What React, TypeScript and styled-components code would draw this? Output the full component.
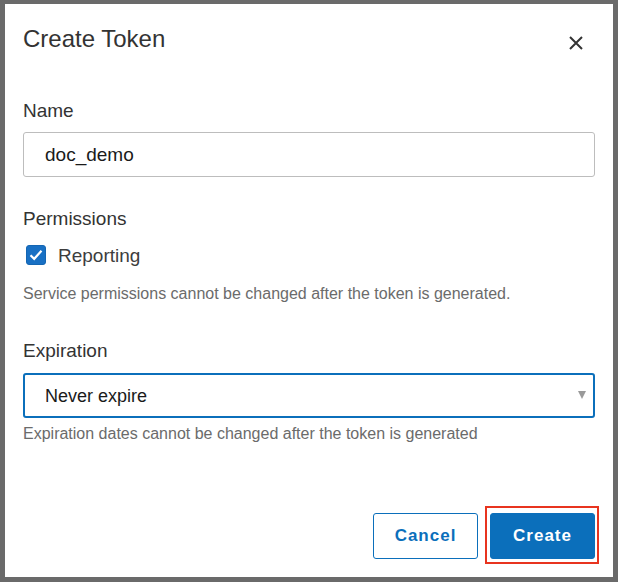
import React from 'react';
import styled, { createGlobalStyle } from 'styled-components';

const GlobalStyle = createGlobalStyle`
  html, body {
    margin: 0;
    padding: 0;
    background: #6a6a6a;
  }
  * {
    box-sizing: border-box;
  }
`;

const BRAND = '#0b6fbb';

const Backdrop = styled.div`
  width: 618px;
  height: 582px;
  padding: 4px 5px 5px 5px;
  background: #6a6a6a;
  font-family: 'Liberation Sans', Arial, sans-serif;
`;

const Dialog = styled.div`
  width: 608px;
  height: 573px;
  background: #fff;
  padding: 20px 18px 18px 18px;
  display: flex;
  flex-direction: column;
`;

const Header = styled.div`
  display: flex;
  justify-content: space-between;
  align-items: flex-start;
  margin-bottom: 45px;
`;

const Title = styled.h2`
  margin: 0;
  font-size: 24px;
  line-height: 29px;
  font-weight: 400;
  color: #333;
`;

const CloseButton = styled.button`
  width: 24px;
  height: 24px;
  margin: 7px 7px 0 0;
  padding: 0;
  border: none;
  background: transparent;
  display: flex;
  align-items: center;
  justify-content: center;
  color: #333;
  cursor: pointer;
`;

const Field = styled.div<{ $gap?: number; $top?: number }>`
  display: flex;
  flex-direction: column;
  margin-top: ${({ $top }) => $top ?? 0}px;
  margin-bottom: ${({ $gap }) => $gap ?? 0}px;
`;

const Label = styled.label<{ $space?: number }>`
  font-size: 19px;
  line-height: 22px;
  color: #333;
  margin-bottom: ${({ $space }) => $space ?? 12}px;
`;

const TextInput = styled.input`
  width: 100%;
  height: 45px;
  border: 1px solid #bdbdbd;
  border-radius: 3px;
  padding: 0 20px 0 21px;
  font-family: inherit;
  font-size: 19px;
  color: #1a1a1a;
  outline: none;
`;

const SelectWrap = styled.div`
  position: relative;
`;

const Select = styled.select`
  width: 100%;
  height: 45px;
  border: 2px solid ${BRAND};
  border-radius: 3px;
  padding: 0 30px 0 20px;
  font-family: inherit;
  font-size: 18px;
  color: #1a1a1a;
  background: #fff;
  appearance: none;
  -webkit-appearance: none;
  outline: none;
`;

const Caret = styled.span`
  position: absolute;
  right: 9px;
  top: 18px;
  width: 0;
  height: 0;
  border-left: 4.5px solid transparent;
  border-right: 4.5px solid transparent;
  border-top: 8px solid #9a9a9a;
  pointer-events: none;
`;

const CheckRow = styled.label`
  display: flex;
  align-items: flex-start;
  gap: 12px;
  padding-left: 3px;
  margin: 0 0 16px 0;
  height: 24px;
`;

const CheckBox = styled.span<{ $checked: boolean }>`
  width: 20px;
  height: 20px;
  margin-top: 1px;
  border-radius: 3px;
  background: ${({ $checked }) => ($checked ? '#1870c4' : '#fff')};
  border: 1px solid ${({ $checked }) => ($checked ? '#1466b3' : '#aaa')};
  display: flex;
  align-items: center;
  justify-content: center;
`;

const CheckText = styled.span`
  font-size: 19px;
  line-height: 22px;
  padding-top: 1px;
  color: #3d3d3d;
`;

const Help = styled.p<{ $top?: number }>`
  margin: ${({ $top }) => $top ?? 0}px 0 0 0;
  font-size: 16px;
  line-height: 20px;
  color: #6b6b6b;
`;

const Footer = styled.div`
  margin-top: auto;
  display: flex;
  justify-content: flex-end;
  gap: 12px;
`;

const Highlight = styled.div`
  position: relative;
  &::after {
    content: '';
    position: absolute;
    top: -7px;
    left: -5px;
    right: -4px;
    bottom: -5px;
    border: 2.5px solid #e8341f;
    pointer-events: none;
  }
`;

const Button = styled.button<{ $primary?: boolean }>`
  width: 105px;
  height: 46px;
  border-radius: 3px;
  border: 1px solid ${BRAND};
  background: ${({ $primary }) => ($primary ? BRAND : '#fff')};
  color: ${({ $primary }) => ($primary ? '#fff' : BRAND)};
  font-family: inherit;
  font-size: 17px;
  font-weight: 700;
  letter-spacing: 1px;
  cursor: pointer;
`;

export default function App() {
  return (
    <>
      <GlobalStyle />
      <Backdrop>
        <Dialog role="dialog" aria-label="Create Token">
          <Header>
            <Title>Create Token</Title>
            <CloseButton aria-label="Close">
              <svg width="14" height="14" viewBox="0 0 14 14">
                <path d="M1 1 L13 13 M13 1 L1 13" stroke="currentColor" strokeWidth="2" />
              </svg>
            </CloseButton>
          </Header>

          <Field $gap={31}>
            <Label $space={10}>Name</Label>
            <TextInput defaultValue="doc_demo" />
          </Field>

          <Field>
            <Label $space={14}>Permissions</Label>
            <CheckRow>
              <CheckBox $checked>
                <svg width="14" height="12" viewBox="0 0 14 12">
                  <path d="M1.5 6.2 L5.2 9.8 L12.5 1.8" fill="none" stroke="#fff" strokeWidth="2.2" />
                </svg>
              </CheckBox>
              <CheckText>Reporting</CheckText>
            </CheckRow>
            <Help>Service permissions cannot be changed after the token is generated.</Help>
          </Field>

          <Field $top={36}>
            <Label $space={11}>Expiration</Label>
            <SelectWrap>
              <Select defaultValue="never">
                <option value="never">Never expire</option>
                <option value="30">30 days</option>
                <option value="90">90 days</option>
              </Select>
              <Caret />
            </SelectWrap>
            <Help $top={6}>Expiration dates cannot be changed after the token is generated</Help>
          </Field>

          <Footer>
            <Button>Cancel</Button>
            <Highlight>
              <Button $primary>Create</Button>
            </Highlight>
          </Footer>
        </Dialog>
      </Backdrop>
    </>
  );
}
